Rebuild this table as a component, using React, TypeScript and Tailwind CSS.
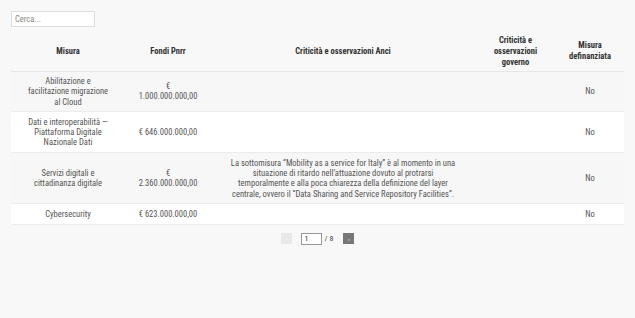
import React from "react";

const rows = [
  {
    misura: "Abilitazione e facilitazione migrazione al Cloud",
    fondi: "€ 1.000.000.000,00",
    anci: "",
    gov: "",
    def: "No",
  },
  {
    misura: "Dati e interoperabilità — Piattaforma Digitale Nazionale Dati",
    fondi: "€ 646.000.000,00",
    anci: "",
    gov: "",
    def: "No",
  },
  {
    misura: "Servizi digitali e cittadinanza digitale",
    fondi: "€ 2.360.000.000,00",
    anci:
      "La sottomisura \u201CMobility as a service for Italy\u201D è al momento in una situazione di ritardo nell\u2019attuazione dovuto al protrarsi temporalmente e alla poca chiarezza della definizione del layer centrale, ovvero il \u201CData Sharing and Service Repository Facilities\u201D.",
    gov: "",
    def: "No",
  },
  {
    misura: "Cybersecurity",
    fondi: "€ 623.000.000,00",
    anci: "",
    gov: "",
    def: "No",
  },
];

export default function App() {
  return (
    <div className="min-h-[318px] w-[635px] bg-[#f8f8f8] px-[11px] pt-[11px] text-[8.5px] leading-[10.3px] text-[#555] [font-family:Roboto,sans-serif] [font-stretch:condensed]">
      <input
        className="block h-[16px] w-[84px] border border-[#dedede] bg-white px-[3px] text-[8.5px] text-[#555] placeholder:text-[#888] outline-none"
        placeholder="Cerca..."
      />
      <table className="mt-[5px] w-[613px] table-fixed border-collapse text-center">
        <colgroup>
          <col className="w-[114px]" />
          <col className="w-[86px]" />
          <col className="w-[264px]" />
          <col className="w-[81px]" />
          <col className="w-[68px]" />
        </colgroup>
        <thead>
          <tr className="h-[39px] border-b border-[#e6e6e6] font-bold leading-[11px] text-[#333]">
            <th className="px-[14px]">Misura</th>
            <th className="px-[12px]">Fondi Pnrr</th>
            <th className="px-[17px]">Criticità e osservazioni Anci</th>
            <th className="px-[10px]">Criticità e osservazioni governo</th>
            <th className="px-[6px]">Misura definanziata</th>
          </tr>
        </thead>
        <tbody>
          {rows.map((r, i) => (
            <tr
              key={i}
              className={
                i % 2 === 0
                  ? "border-b border-[#ececec] bg-[#f7f7f7]"
                  : "border-b border-[#ececec] bg-white"
              }
            >
              <td className="px-[14px] py-[4.5px]">{r.misura}</td>
              <td className="px-[12px] py-[4.5px]">{r.fondi}</td>
              <td className="px-[17px] py-[4.5px]">{r.anci}</td>
              <td className="px-[10px] py-[4.5px]">{r.gov}</td>
              <td className="px-[6px] py-[4.5px]">{r.def}</td>
            </tr>
          ))}
        </tbody>
      </table>
      <div className="mt-[8px] flex items-center justify-center">
        <button className="flex h-[11px] w-[11px] items-center justify-center bg-[#e8e8e8] text-[6px] text-[#fff]">
          ‹
        </button>
        <input
          className="ml-[9px] h-[12px] w-[21px] border border-[#999] bg-white px-[3px] text-[8px] text-[#333] outline-none"
          defaultValue="1"
        />
        <span className="ml-[3px] text-[8px] text-[#444]">/ 8</span>
        <button className="ml-[10px] flex h-[11px] w-[11px] items-center justify-center bg-[#777] text-[6px] text-white">
          ›
        </button>
      </div>
    </div>
  );
}
